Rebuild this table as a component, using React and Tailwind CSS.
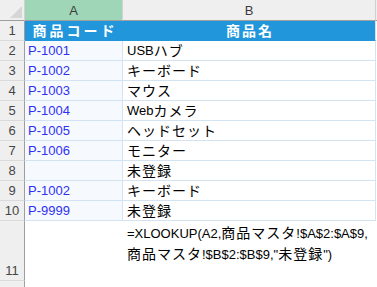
import React from 'react';

// product code lookup sheet: two table columns plus the XLOOKUP formula in row 11
const rows = [
  ['P-1001', 'USBハブ'],
  ['P-1002', 'キーボード'],
  ['P-1003', 'マウス'],
  ['P-1004', 'Webカメラ'],
  ['P-1005', 'ヘッドセット'],
  ['P-1006', 'モニター'],
  ['', '未登録'],
  ['P-1002', 'キーボード'],
  ['P-9999', '未登録'],
];

const formula = ['=XLOOKUP(A2,商品マスタ!$A$2:$A$9,', '商品マスタ!$B$2:$B$9,"未登録")'];

// Japanese runs are set a little larger than the latin text, like Excel's UI font
const cjk = /([\u3000-\u30ff\u4e00-\u9fff\uff00-\uffef]+)/;

const Mixed = ({ text }) => (
  <>
    {text.split(cjk).map((part, i) =>
      cjk.test(part) ? (
        <span key={i} className="text-[14px] tracking-[1px]">
          {part}
        </span>
      ) : (
        <span key={i}>{part}</span>
      )
    )}
  </>
);

const RowNum = ({ n, className = '' }) => (
  <div
    className={`w-[25px] shrink-0 flex justify-center bg-[#efefef] border-r border-r-[#9e9e9e] border-b border-b-[#dadada] text-[13px] text-[#454545] ${className}`}
  >
    {n}
  </div>
);

export default function App() {
  return (
    <div className="w-[377px] h-[287px] overflow-hidden bg-white font-['Liberation_Sans','Noto_Sans_CJK_JP',sans-serif] text-[13px] text-black leading-none">
      {/* column headers */}
      <div className="flex h-[21px]">
        <div className="w-[25px] shrink-0 bg-[#efefef] border-r border-r-[#d0d0d0] border-b border-b-[#9e9e9e] flex items-end justify-end p-[2px]">
          <svg width="12" height="12" viewBox="0 0 12 12">
            <polygon points="12,0 12,12 0,12" fill="#d6d6d6" />
          </svg>
        </div>
        <div className="w-[98px] shrink-0 bg-[#a0d6b8] border-r border-r-[#d0d0d0] border-b border-b-[#9e9e9e] flex items-center justify-center text-[#3c3c3c]">
          A
        </div>
        <div className="w-[253px] shrink-0 bg-[#efefef] border-r border-r-[#d0d0d0] border-b border-b-[#9e9e9e] flex items-center justify-center text-[#3c3c3c]">
          B
        </div>
        <div className="flex-1 bg-[#efefef] border-b border-b-[#9e9e9e]" />
      </div>

      {/* table header row */}
      <div className="flex h-[20px]">
        <RowNum n={1} className="items-center" />
        <div className="w-[98px] shrink-0 bg-[#2196db] border-r border-r-[#2196db] border-b border-b-[#2196db] flex items-center justify-center pl-[3px] text-white font-bold text-[14px] tracking-[3px]">
          商品コード
        </div>
        <div className="w-[253px] shrink-0 bg-[#2196db] border-r border-r-[#d3e3f1] border-b border-b-[#2196db] flex items-center justify-center pl-[2px] text-white font-bold text-[14px] tracking-[2px]">
          商品名
        </div>
        <div className="flex-1" />
      </div>

      {rows.map(([code, name], i) => (
        <div key={i} className="flex h-[20px]">
          <RowNum n={i + 2} className="items-center" />
          <div className="w-[98px] shrink-0 bg-[#f6fafe] border-r border-r-[#d3e3f1] border-b border-b-[#d3e3f1] flex items-center pl-[3px] text-[#2f2ff5]">
            {code}
          </div>
          <div className="w-[253px] shrink-0 border-r border-r-[#d3e3f1] border-b border-b-[#d3e3f1] flex items-center pl-[4px]">
            <Mixed text={name} />
          </div>
          <div className="flex-1" />
        </div>
      ))}

      {/* row 11 holds the formula text, wrapped over two lines */}
      <div className="flex h-[60px]">
        <RowNum n={11} className="items-end pb-[3px]" />
        <div className="w-[98px] shrink-0" />
        <div className="flex-1 flex flex-col pl-[4px] pt-[5px] gap-[7px]">
          {formula.map((line, i) => (
            <div key={i} className="whitespace-nowrap">
              <Mixed text={line} />
            </div>
          ))}
        </div>
      </div>

      <div className="flex h-[6px]">
        <div className="w-[25px] shrink-0 bg-[#efefef] border-r border-r-[#9e9e9e]" />
      </div>
    </div>
  );
}
